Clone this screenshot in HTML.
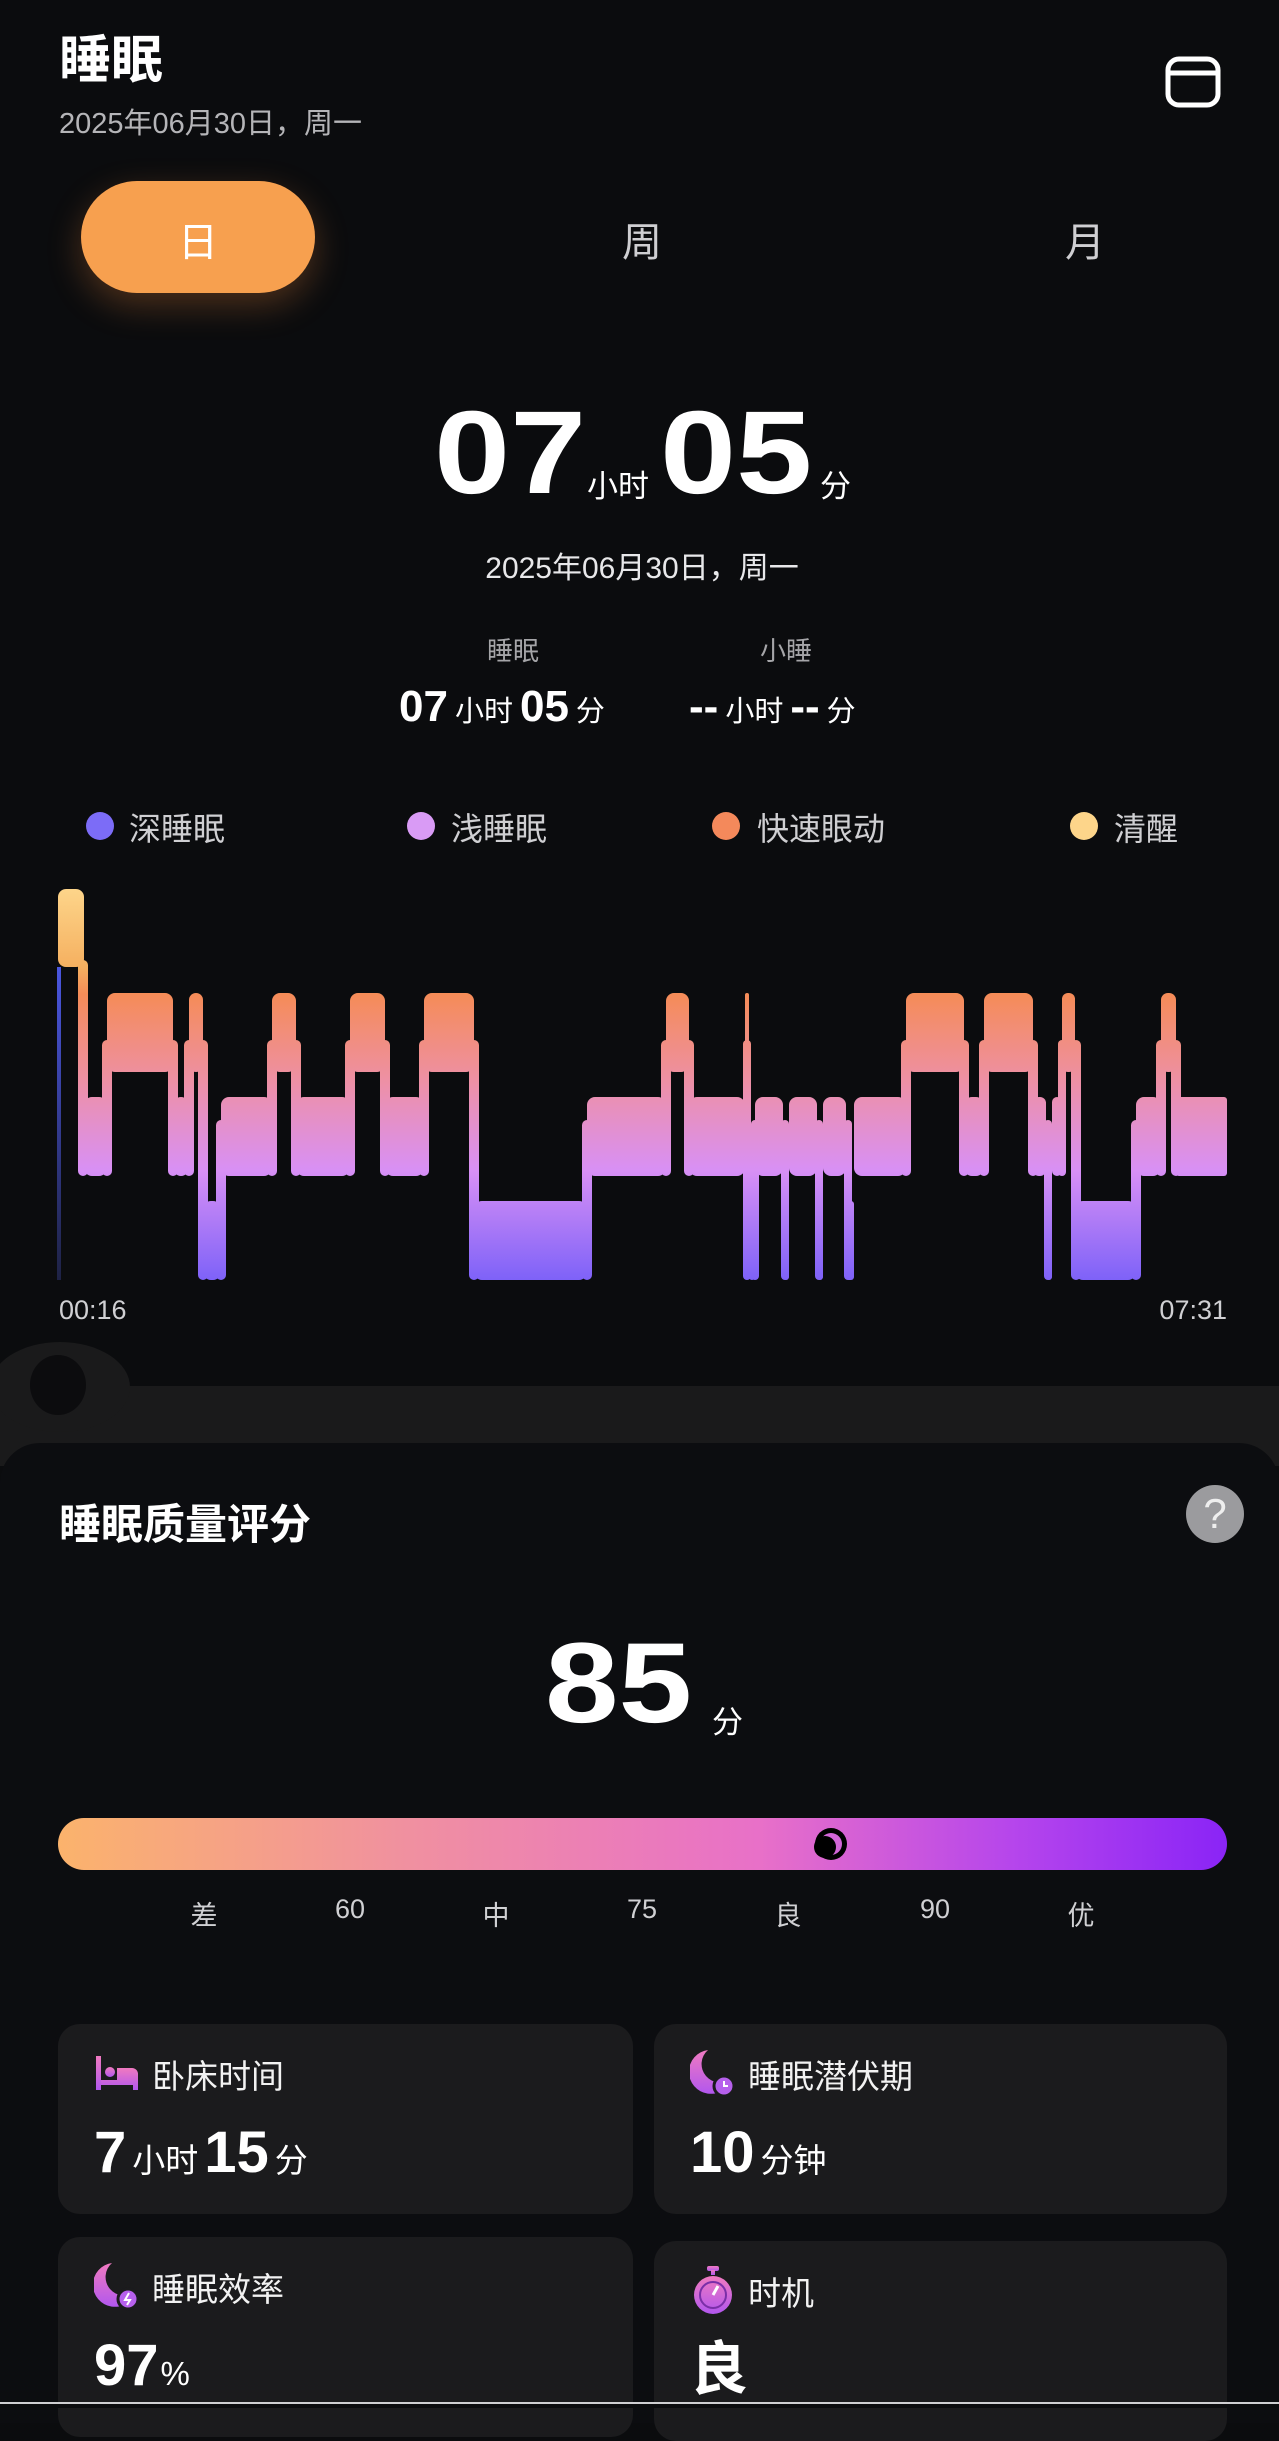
<!DOCTYPE html>
<html><head><meta charset="utf-8">
<style>
*{margin:0;padding:0;box-sizing:border-box}
body{width:1279px;height:2408px;background:#0b0c0e;color:#fff;font-family:"Liberation Sans","Noto Sans CJK SC",sans-serif;position:relative;overflow:hidden}
.a{position:absolute;white-space:nowrap}
.c{transform:translateX(-50%)}
.card{position:absolute;background:#1b1b1d;border-radius:22px}
.ct{position:absolute;left:94px;top:26px;font-size:33px;color:#f2f2f2}
.ic{position:absolute;left:36px;top:24px}
.val{position:absolute;left:36px;top:95px;font-size:58px;font-weight:bold}
.val small{font-size:33px;font-weight:normal;margin:0 6px}
.big{display:inline-block;transform-origin:left top;transform:scaleX(1.16)}
</style></head><body>

<div class="a" style="left:59px;top:18px;font-size:52px;font-weight:bold">睡眠</div>
<div class="a" style="left:59px;top:100px;font-size:29px;color:#b5b5b8">2025年06月30日，周一</div>
<svg class="a" style="left:1165px;top:56px" width="56" height="52" viewBox="0 0 56 52"><rect x="3" y="3" width="50" height="46" rx="11" fill="none" stroke="#fff" stroke-width="5"/><line x1="3" y1="17" x2="53" y2="17" stroke="#fff" stroke-width="5"/></svg>

<div class="a" style="left:81px;top:181px;width:234px;height:112px;border-radius:56px;background:#f7a04f;box-shadow:0 12px 34px rgba(247,140,60,0.28)"></div>
<div class="a c" style="left:198px;top:210px;font-size:40px;color:#fff">日</div>
<div class="a c" style="left:642px;top:210px;font-size:40px;color:#cfcfd2">周</div>
<div class="a c" style="left:1085px;top:210px;font-size:40px;color:#cfcfd2">月</div>

<div class="a" style="left:434px;top:385px;font-size:118px;font-weight:bold"><span class="big">07</span></div>
<div class="a" style="left:587px;top:461px;font-size:31px">小时</div>
<div class="a" style="left:660px;top:385px;font-size:118px;font-weight:bold"><span class="big">05</span></div>
<div class="a" style="left:820px;top:461px;font-size:31px">分</div>
<div class="a c" style="left:642px;top:543px;font-size:30px;color:#e8e8ea">2025年06月30日，周一</div>

<div class="a c" style="left:513px;top:631px;font-size:26px;color:#a5a5a8">睡眠</div>
<div class="a c" style="left:786px;top:631px;font-size:26px;color:#a5a5a8">小睡</div>
<div class="a" style="left:399px;top:682px;font-size:44px;font-weight:bold">07<span style="font-size:29px;font-weight:normal;margin:0 7px">小时</span>05<span style="font-size:29px;font-weight:normal;margin-left:7px">分</span></div>
<div class="a" style="left:689px;top:682px;font-size:44px;font-weight:bold">--<span style="font-size:29px;font-weight:normal;margin:0 7px">小时</span>--<span style="font-size:29px;font-weight:normal;margin-left:7px">分</span></div>

<div class="a" style="left:86px;top:812px;width:28px;height:28px;border-radius:50%;background:#7c6cf7"></div>
<div class="a" style="left:129px;top:804px;font-size:32px;color:#cfcfd2">深睡眠</div>
<div class="a" style="left:407px;top:812px;width:28px;height:28px;border-radius:50%;background:#d99bf5"></div>
<div class="a" style="left:451px;top:804px;font-size:32px;color:#cfcfd2">浅睡眠</div>
<div class="a" style="left:712px;top:812px;width:28px;height:28px;border-radius:50%;background:#f4895b"></div>
<div class="a" style="left:757px;top:804px;font-size:32px;color:#cfcfd2">快速眼动</div>
<div class="a" style="left:1070px;top:812px;width:28px;height:28px;border-radius:50%;background:#fdd58a"></div>
<div class="a" style="left:1114px;top:804px;font-size:32px;color:#cfcfd2">清醒</div>

<svg class="a" style="left:0;top:0" width="1279" height="1300">
<defs>
<linearGradient id="g" gradientUnits="userSpaceOnUse" x1="0" y1="889" x2="0" y2="1280">
<stop offset="0" stop-color="#fdd58a"/><stop offset="0.2" stop-color="#f5b060"/><stop offset="0.27" stop-color="#f58c58"/><stop offset="0.5" stop-color="#ed90a8"/><stop offset="0.72" stop-color="#d890f5"/><stop offset="1" stop-color="#7e62f8"/>
</linearGradient>
<linearGradient id="b" x1="0" y1="0" x2="0" y2="1"><stop offset="0" stop-color="#4a56e0"/><stop offset="1" stop-color="#1e2244"/></linearGradient>
</defs>
<rect x="57" y="967" width="4" height="313" fill="url(#b)"/>
<g fill="url(#g)">
<rect x="58" y="889" width="26" height="78" rx="8"/>
<rect x="78" y="960" width="10" height="216" rx="5"/>
<rect x="84" y="1097" width="23" height="79" rx="8"/>
<rect x="107" y="993" width="66" height="79" rx="8"/>
<rect x="173" y="1097" width="16" height="79" rx="8"/>
<rect x="189" y="993" width="14" height="79" rx="7"/>
<rect x="203" y="1201" width="18" height="79" rx="8"/>
<rect x="221" y="1097" width="51" height="79" rx="8"/>
<rect x="272" y="993" width="24" height="79" rx="8"/>
<rect x="296" y="1097" width="54" height="79" rx="8"/>
<rect x="350" y="993" width="35" height="79" rx="8"/>
<rect x="385" y="1097" width="39" height="79" rx="8"/>
<rect x="424" y="993" width="50" height="79" rx="8"/>
<rect x="474" y="1201" width="113" height="79" rx="8"/>
<rect x="587" y="1097" width="79" height="79" rx="8"/>
<rect x="666" y="993" width="23" height="79" rx="8"/>
<rect x="689" y="1097" width="56" height="79" rx="8"/>
<rect x="745" y="993" width="4" height="79" rx="2"/>
<rect x="749" y="1201" width="6" height="79" rx="3"/>
<rect x="755" y="1097" width="28" height="79" rx="8"/>
<rect x="783" y="1201" width="6" height="79" rx="3"/>
<rect x="789" y="1097" width="28" height="79" rx="8"/>
<rect x="817" y="1201" width="6" height="79" rx="3"/>
<rect x="823" y="1097" width="23" height="79" rx="8"/>
<rect x="846" y="1201" width="8" height="79" rx="3"/>
<rect x="854" y="1097" width="52" height="79" rx="8"/>
<rect x="906" y="993" width="58" height="79" rx="8"/>
<rect x="964" y="1097" width="20" height="79" rx="8"/>
<rect x="984" y="993" width="49" height="79" rx="8"/>
<rect x="1033" y="1097" width="13" height="79" rx="6"/>
<rect x="1046" y="1201" width="6" height="79" rx="3"/>
<rect x="1052" y="1097" width="10" height="79" rx="5"/>
<rect x="1062" y="993" width="13" height="79" rx="6"/>
<rect x="1075" y="1201" width="61" height="79" rx="8"/>
<rect x="1136" y="1097" width="25" height="79" rx="8"/>
<rect x="1161" y="993" width="15" height="79" rx="7"/>
<rect x="1176" y="1097" width="51" height="79" rx="3"/>
<rect x="102" y="1040" width="10" height="136" rx="5"/>
<rect x="168" y="1040" width="10" height="136" rx="5"/>
<rect x="184" y="1040" width="10" height="136" rx="5"/>
<rect x="198" y="1040" width="10" height="240" rx="5"/>
<rect x="216" y="1120" width="10" height="160" rx="5"/>
<rect x="267" y="1040" width="10" height="136" rx="5"/>
<rect x="291" y="1040" width="10" height="136" rx="5"/>
<rect x="345" y="1040" width="10" height="136" rx="5"/>
<rect x="380" y="1040" width="10" height="136" rx="5"/>
<rect x="419" y="1040" width="10" height="136" rx="5"/>
<rect x="469" y="1040" width="10" height="240" rx="5"/>
<rect x="582" y="1120" width="10" height="160" rx="5"/>
<rect x="661" y="1040" width="10" height="136" rx="5"/>
<rect x="684" y="1040" width="10" height="136" rx="5"/>
<rect x="743" y="1040" width="8" height="240" rx="4"/>
<rect x="751" y="1120" width="8" height="160" rx="4"/>
<rect x="781" y="1120" width="8" height="160" rx="4"/>
<rect x="815" y="1120" width="8" height="160" rx="4"/>
<rect x="844" y="1120" width="8" height="160" rx="4"/>
<rect x="901" y="1040" width="10" height="136" rx="5"/>
<rect x="959" y="1040" width="10" height="136" rx="5"/>
<rect x="979" y="1040" width="10" height="136" rx="5"/>
<rect x="1028" y="1040" width="10" height="136" rx="5"/>
<rect x="1044" y="1120" width="8" height="160" rx="4"/>
<rect x="1058" y="1040" width="8" height="136" rx="4"/>
<rect x="1071" y="1040" width="10" height="240" rx="5"/>
<rect x="1131" y="1120" width="10" height="160" rx="5"/>
<rect x="1156" y="1040" width="10" height="136" rx="5"/>
<rect x="1171" y="1040" width="10" height="136" rx="5"/>
</g>
</svg>
<div class="a" style="left:59px;top:1295px;font-size:27px;color:#d0d0d3">00:16</div>
<div class="a" style="right:52px;top:1295px;font-size:27px;color:#d0d0d3">07:31</div>

<div class="a" style="left:0;top:1386px;width:1279px;height:80px;background:#1a1a1b"></div>
<div class="a" style="left:-10px;top:1342px;width:140px;height:90px;border-radius:50%;background:#1a1a1b"></div>
<div class="a" style="left:30px;top:1355px;width:56px;height:60px;border-radius:50%;background:#0c0c0e"></div>

<div class="a" style="left:0;top:1443px;width:1279px;height:980px;background:#0c0d10;border-radius:40px 40px 0 0"></div>
<div class="a" style="left:59px;top:1491px;font-size:42px;font-weight:bold">睡眠质量评分</div>
<div class="a" style="left:1186px;top:1485px;width:58px;height:58px;border-radius:50%;background:#9b9b9e;color:#eee;font-size:42px;text-align:center;line-height:58px">?</div>

<div class="a" style="left:545px;top:1618px;font-size:114px;font-weight:bold"><span class="big">85</span></div>
<div class="a" style="left:712px;top:1697px;font-size:31px">分</div>

<div class="a" style="left:58px;top:1818px;width:1169px;height:52px;border-radius:26px;background:linear-gradient(90deg,#fbb36c 0%,#f090a0 30%,#e870c8 60%,#b545ec 82%,#8a24f6 100%)"></div>
<svg class="a" style="left:810px;top:1823px" width="42" height="42" viewBox="0 0 42 42"><circle cx="21" cy="21" r="16" fill="#000"/><circle cx="21" cy="21" r="11" fill="#d266d8"/><circle cx="15" cy="24" r="11" fill="#000"/></svg>
<div class="a c" style="left:204px;top:1894px;font-size:27px;color:#d0d0d3">差</div>
<div class="a c" style="left:350px;top:1894px;font-size:27px;color:#d0d0d3">60</div>
<div class="a c" style="left:496px;top:1894px;font-size:27px;color:#d0d0d3">中</div>
<div class="a c" style="left:642px;top:1894px;font-size:27px;color:#d0d0d3">75</div>
<div class="a c" style="left:788px;top:1894px;font-size:27px;color:#d0d0d3">良</div>
<div class="a c" style="left:935px;top:1894px;font-size:27px;color:#d0d0d3">90</div>
<div class="a c" style="left:1081px;top:1894px;font-size:27px;color:#d0d0d3">优</div>

<svg width="0" height="0" style="position:absolute"><defs><linearGradient id="p" x1="0" y1="0" x2="0" y2="1"><stop offset="0" stop-color="#f07ac0"/><stop offset="1" stop-color="#b257ee"/></linearGradient></defs></svg>

<div class="card" style="left:58px;top:2024px;width:575px;height:190px">
<svg class="ic" width="46" height="46" viewBox="0 0 46 46"><rect x="2" y="8" width="5" height="34" fill="url(#p)"/><circle cx="16" cy="24" r="5" fill="url(#p)"/><path d="M7 32 H44 V42 H39 V37 H7Z M23 20 H38 A6 6 0 0 1 44 26 V32 H23Z" fill="url(#p)"/></svg>
<div class="ct">卧床时间</div>
<div class="val">7<small>小时</small>15<small>分</small></div></div>

<div class="card" style="left:654px;top:2024px;width:573px;height:190px">
<svg class="ic" width="46" height="52" viewBox="0 0 46 52"><path d="M18 2 A22 22 0 1 0 42 30 A14 14 0 0 1 18 2Z" fill="url(#p)"/><circle cx="34" cy="38" r="10" fill="#b660ec" stroke="#1b1b1d" stroke-width="3"/><path d="M34 33 V38 H38" stroke="#fff" stroke-width="2" fill="none"/></svg>
<div class="ct">睡眠潜伏期</div>
<div class="val">10<small>分钟</small></div></div>

<div class="card" style="left:58px;top:2237px;width:575px;height:200px">
<svg class="ic" width="46" height="52" viewBox="0 0 46 52"><path d="M18 2 A22 22 0 1 0 42 30 A14 14 0 0 1 18 2Z" fill="url(#p)"/><circle cx="34" cy="38" r="10" fill="#b660ec" stroke="#1b1b1d" stroke-width="3"/><path d="M35 32 L31 39 H36 L33 44" stroke="#fff" stroke-width="2" fill="none"/></svg>
<div class="ct">睡眠效率</div>
<div class="val">97<small style="margin-left:2px">%</small></div></div>

<div class="card" style="left:654px;top:2241px;width:573px;height:200px">
<svg class="ic" width="46" height="52" viewBox="0 0 46 52"><rect x="17" y="1" width="12" height="5" rx="2" fill="url(#p)"/><rect x="21" y="5" width="4" height="5" fill="url(#p)"/><circle cx="23" cy="30" r="19" fill="url(#p)"/><circle cx="23" cy="30" r="13" fill="none" stroke="#7a2fa8" stroke-width="2"/><path d="M23 30 L28 21" stroke="#fff" stroke-width="3"/></svg>
<div class="ct">时机</div>
<div class="val" style="top:81px">良</div></div>

<div class="a" style="left:0;top:2402px;width:1279px;height:2px;background:#cfcfd2"></div>
<div class="a" style="left:0;top:2404px;width:1279px;height:4px;background:#0b0c0e"></div>
</body></html>
